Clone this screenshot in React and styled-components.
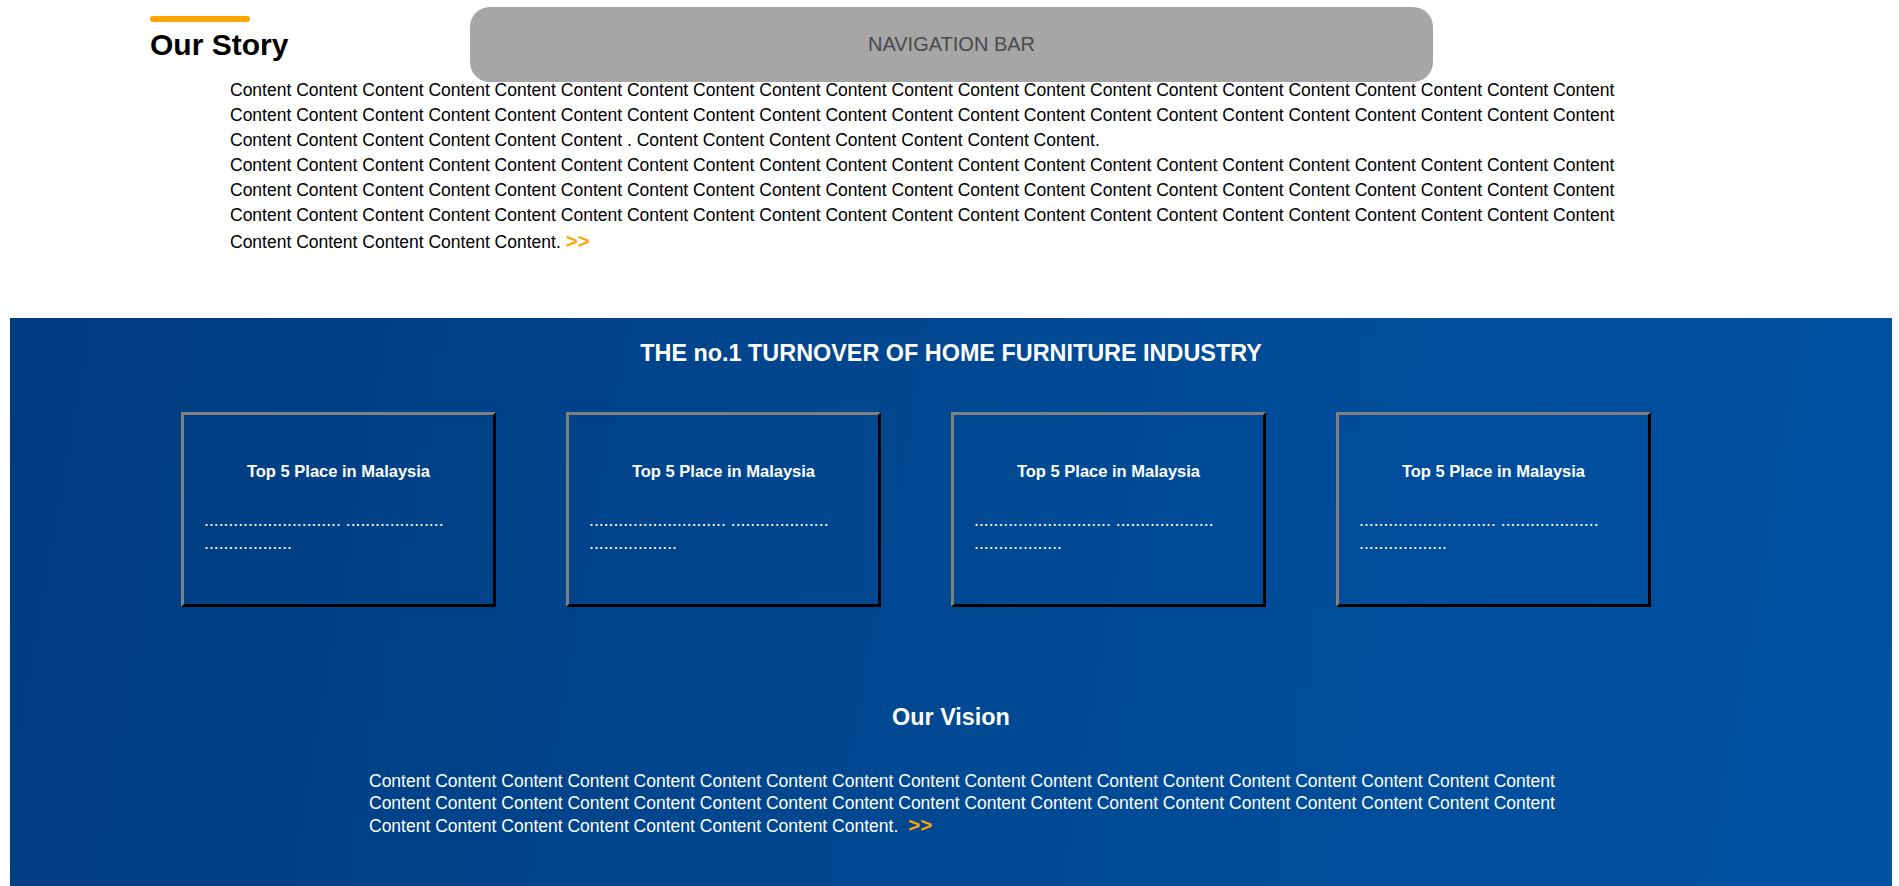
import styled, { createGlobalStyle } from 'styled-components';

const GlobalStyle = createGlobalStyle`
  body {
    margin: 0;
    background: #ffffff;
    font-family: "Liberation Sans", Arial, sans-serif;
  }
`;

const NavBar = styled.nav`
  position: fixed;
  top: 7px;
  left: 470px;
  width: 963px;
  height: 75px;
  border-radius: 20px;
  background: #a6a6a6;
  display: flex;
  align-items: center;
  justify-content: center;
  font-size: 20px;
  color: #4a4a4a;
  z-index: 10;
`;

const StorySection = styled.section`
  padding-top: 16px;
`;

const StoryHeader = styled.div`
  padding-left: 150px;
`;

const Accent = styled.div`
  width: 100px;
  height: 6px;
  border-radius: 3px;
  background: #ffa500;
`;

const StoryTitle = styled.h1`
  margin: 6px 0 0;
  font-size: 30px;
  line-height: 34px;
  font-weight: 700;
  color: #000;
`;

const StoryBody = styled.div`
  width: 1439px;
  margin: 16px auto 0;
`;

const Paragraph = styled.p`
  margin: 0;
  font-size: 17.5px;
  line-height: ${(p) => p.$lh || 25}px;
  color: ${(p) => (p.$light ? '#ffffff' : '#000000')};
`;

const More = styled.span`
  margin-left: ${(p) => p.$gap || 0}px;
  color: #ffa500;
  font-weight: 700;
  font-size: 20.5px;
`;

const Banner = styled.section`
  margin: 63px 7px 0 10px;
  padding: 22px 0 80px;
  background: linear-gradient(100deg, #003c7f 0%, #00468e 40%, #004e9c 75%, #0052a3 100%);
  color: #ffffff;
`;

const SectionHeading = styled.h2`
  margin: ${(p) => p.$top || 0}px 0 0;
  font-size: 23.4px;
  line-height: 27px;
  font-weight: 700;
  text-align: center;
`;

const CardRow = styled.div`
  display: flex;
  gap: 70px;
  margin-top: 45px;
  padding-left: 171px;
`;

const Card = styled.div`
  width: 315px;
  height: 195px;
  box-sizing: border-box;
  padding: 46px 20px 0;
  border: 3px solid;
  border-color: #808080 #000000 #000000 #808080;
`;

const CardTitle = styled.h3`
  margin: 0 0 28px;
  font-size: 16.5px;
  line-height: 20px;
  font-weight: 700;
  text-align: center;
`;

const CardText = styled.p`
  margin: 0;
  font-size: 17.6px;
  line-height: 23px;
`;

const VisionBody = styled.div`
  width: 1215px;
  margin: 39px 0 0 359px;
`;

const words = (n) => Array(n).fill('Content').join(' ');

const dots = `${'.'.repeat(28)} ${'.'.repeat(20)} ${'.'.repeat(18)}`;

const cards = [1, 2, 3, 4];

export default function App() {
  return (
    <>
      <GlobalStyle />
      <NavBar>NAVIGATION BAR</NavBar>
      <StorySection>
        <StoryHeader>
          <Accent />
          <StoryTitle>Our Story</StoryTitle>
        </StoryHeader>
        <StoryBody>
          <Paragraph>
            {words(48)} . {words(7)}.
          </Paragraph>
          <Paragraph>
            {words(68)}. <More>&gt;&gt;</More>
          </Paragraph>
        </StoryBody>
      </StorySection>

      <Banner>
        <SectionHeading>THE no.1 TURNOVER OF HOME FURNITURE INDUSTRY</SectionHeading>
        <CardRow>
          {cards.map((c) => (
            <Card key={c}>
              <CardTitle>Top 5 Place in Malaysia</CardTitle>
              <CardText>{dots}</CardText>
            </Card>
          ))}
        </CardRow>
        <SectionHeading $top={97}>Our Vision</SectionHeading>
        <VisionBody>
          <Paragraph $light $lh={22}>
            {words(44)}.<More $gap={10}>&gt;&gt;</More>
          </Paragraph>
        </VisionBody>
      </Banner>
    </>
  );
}
